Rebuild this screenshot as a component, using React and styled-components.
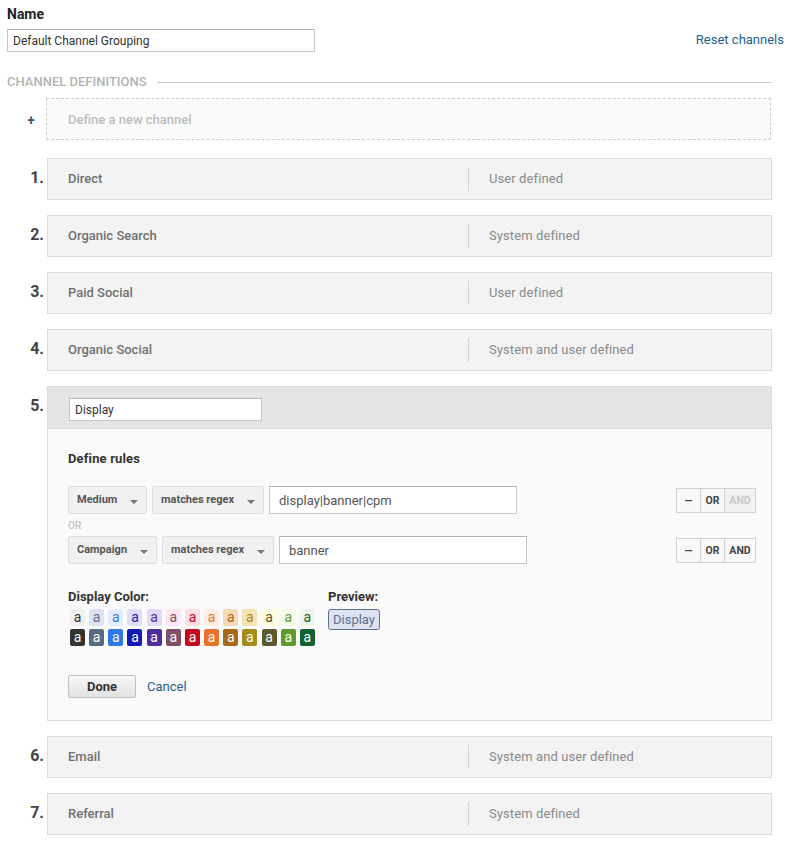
import React from 'react'
import styled, { createGlobalStyle } from 'styled-components'

const GlobalStyle = createGlobalStyle`
  body {
    margin: 0;
    background: #fff;
    font-family: Roboto, "Liberation Sans", sans-serif;
    color: #333;
  }
`

const Page = styled.div`
  width: 794px;
  height: 841px;
  overflow: hidden;
  padding: 6px 10px 0 7px;
  box-sizing: border-box;
`

const NameRow = styled.div`
  display: flex;
  justify-content: space-between;
  align-items: flex-end;
`

const NameLabel = styled.div`
  font-size: 14px;
  line-height: 16px;
  font-weight: 700;
  color: #222;
  margin-bottom: 7px;
`

const TextInput = styled.div`
  box-sizing: border-box;
  width: ${p => p.$width}px;
  height: ${p => p.$height || 23}px;
  padding-left: ${p => p.$pad || 5}px;
  background: #fff;
  border: 1px solid #c8c8c8;
  border-top-color: #b4b4b4;
  font-size: ${p => p.$size || 12}px;
  line-height: ${p => (p.$height || 23) - 1}px;
  color: ${p => p.$color || '#333'};
`

const ResetLink = styled.a`
  font-size: 13px;
  line-height: 16px;
  color: #1f5f8f;
  margin-bottom: 4px;
`

const SectionTitle = styled.div`
  display: flex;
  align-items: center;
  gap: 10px;
  width: 765px;
  margin-top: 22px;
  font-size: 13px;
  line-height: 16px;
  font-weight: 500;
  color: #b4b4b4;
  &::after {
    content: '';
    flex: 1;
    height: 1px;
    background: #c9c9c9;
  }
`

const ChannelList = styled.div`
  display: flex;
  flex-direction: column;
  gap: 15px;
  margin-top: 8px;
`

const ChannelItem = styled.div`
  display: grid;
  grid-template-columns: 40px 725px;
  margin-bottom: ${p => p.$after || 0}px;
`

const ChannelNum = styled.div`
  font-size: 16px;
  line-height: 20px;
  font-weight: 700;
  color: #444;
  text-align: right;
  padding: 10px 3px 0 0;
`

const Plus = styled.div`
  font-size: 14px;
  line-height: 16px;
  font-weight: 700;
  color: #555;
  text-align: right;
  padding: 14px 12px 0 0;
`

const NewChannel = styled.div`
  box-sizing: border-box;
  height: 42px;
  margin: 0 1px 0 -1px;
  padding-left: 21px;
  background: #fafafa;
  border: 1px dashed #cfcfcf;
  font-size: 13px;
  line-height: 41px;
  font-weight: 500;
  color: #bdbdbd;
`

const ChannelBar = styled.div`
  box-sizing: border-box;
  height: 42px;
  display: grid;
  grid-template-columns: 420px 1fr;
  align-items: center;
  background: #f3f3f3;
  border: 1px solid #dcdcdc;
`

const ChannelName = styled.div`
  padding: 0 0 2px 20px;
  font-size: 13px;
  font-weight: 500;
  color: #707070;
`

const ChannelType = styled.div`
  height: 24px;
  line-height: 24px;
  padding-left: 20px;
  border-left: 1px solid #d4d4d4;
  font-size: 13px;
  letter-spacing: 0.09px;
  color: #8a8a8a;
`

const Panel = styled.div`
  box-sizing: border-box;
  height: 335px;
  background: #fafafa;
  border: 1px solid #dcdcdc;
`

const PanelHeader = styled.div`
  box-sizing: border-box;
  height: 42px;
  padding: 11px 0 0 21px;
  background: #e5e5e5;
  border-bottom: 1px solid #dcdcdc;
`

const PanelBody = styled.div`
  padding: 22px 15px 0 20px;
`

const RulesTitle = styled.div`
  font-size: 13px;
  line-height: 16px;
  font-weight: 700;
  letter-spacing: 0.15px;
  color: #333;
`

const RuleRow = styled.div`
  display: flex;
  align-items: center;
  gap: 5px;
  height: 28px;
  margin-top: ${p => p.$top || 0}px;
`

const Select = styled.div`
  box-sizing: border-box;
  width: ${p => p.$width}px;
  height: 28px;
  padding: 0 0 2px 8px;
  display: flex;
  align-items: center;
  justify-content: space-between;
  background: #f1f1f1;
  border: 1px solid #dedede;
  border-radius: 2px;
  font-size: 11px;
  font-weight: 700;
  color: #555;
  &::after {
    content: '';
    margin: 5px 8px 0 0;
    border-left: 4px solid transparent;
    border-right: 4px solid transparent;
    border-top: 4px solid #777;
  }
`

const OrLabel = styled.div`
  height: 22px;
  font-size: 10px;
  line-height: 23px;
  font-weight: 500;
  color: #c4c4c4;
`

const RuleButtons = styled.div`
  display: flex;
  margin-left: auto;
  border: 1px solid #d2d2d2;
  box-sizing: border-box;
  width: 80px;
  height: 25px;
`

const RuleButton = styled.div`
  box-sizing: border-box;
  width: ${p => p.$width}px;
  text-align: center;
  background: ${p => (p.$off ? '#f1f1f1' : '#f8f8f8')};
  border-left: ${p => (p.$first ? 'none' : '1px solid #d2d2d2')};
  font-size: 10.5px;
  line-height: 23px;
  font-weight: 700;
  color: ${p => (p.$off ? '#c8c8c8' : '#444')};
`

const ColorRow = styled.div`
  display: flex;
  gap: 13px;
  margin-top: 25px;
`

const ColorTitle = styled.div`
  font-size: 13px;
  line-height: 16px;
  font-weight: 700;
  color: #333;
  margin-bottom: 4px;
`

const Swatches = styled.div`
  display: grid;
  grid-template-columns: repeat(13, 15px);
  grid-auto-rows: 17px;
  column-gap: 4.167px;
  row-gap: 3px;
  width: 245px;
  padding-left: 2px;
`

const Swatch = styled.div`
  text-align: center;
  border-radius: 2px;
  background: ${p => p.$bg};
  color: ${p => p.$fg};
  font-size: 14px;
  line-height: 17px;
`

const PreviewChip = styled.div`
  box-sizing: border-box;
  width: 52px;
  height: 21px;
  text-align: center;
  background: #dde3f0;
  border: 1px solid #5f6f90;
  border-radius: 3px;
  font-size: 13px;
  line-height: 20px;
  color: #5f6f90;
`

const Actions = styled.div`
  display: flex;
  align-items: center;
  gap: 11px;
  margin-top: 29px;
`

const DoneButton = styled.div`
  box-sizing: border-box;
  width: 68px;
  height: 23px;
  text-align: center;
  background: linear-gradient(#f7f7f7, #e2e2e2);
  border: 1px solid #c0c0c0;
  border-radius: 2px;
  font-size: 13px;
  line-height: 21px;
  font-weight: 700;
  color: #333;
`

const CancelLink = styled.a`
  font-size: 13px;
  color: #1f5f8f;
`

const lightColors = [
  ['#f1f1f1', '#333'], ['#dde3f0', '#5f6f90'], ['#e3edfd', '#3b78e7'], ['#dcdffa', '#1a22b5'],
  ['#e3d9f7', '#4f2d9a'], ['#fbe6f1', '#7f5068'], ['#fcdfe2', '#c00d25'], ['#fdeee2', '#e8722a'],
  ['#f7d9b8', '#a8681c'], ['#f4e4b4', '#a58a1c'], ['#fdfddc', '#555530'], ['#f6fbe9', '#5f9a30'],
  ['#eef5ec', '#11642f'],
]

const darkColors = [
  '#333333', '#5a6a85', '#2f78ea', '#1219b4', '#4f2d9a', '#7f5068', '#c4081f',
  '#e8722a', '#a8681c', '#a58a1c', '#595a30', '#5f9a30', '#11642f',
]

const channelsTop = [
  ['Direct', 'User defined'],
  ['Organic Search', 'System defined'],
  ['Paid Social', 'User defined'],
  ['Organic Social', 'System and user defined'],
]

const channelsBottom = [
  ['Email', 'System and user defined', 6],
  ['Referral', 'System defined', 7],
]

function Channel({ num, name, type }) {
  return (
    <ChannelItem>
      <ChannelNum>{num}.</ChannelNum>
      <ChannelBar>
        <ChannelName>{name}</ChannelName>
        <ChannelType>{type}</ChannelType>
      </ChannelBar>
    </ChannelItem>
  )
}

function Buttons({ andOff }) {
  return (
    <RuleButtons>
      <RuleButton $first $width={23}>—</RuleButton>
      <RuleButton $width={24}>OR</RuleButton>
      <RuleButton $width={31} $off={andOff}>AND</RuleButton>
    </RuleButtons>
  )
}

export default function App() {
  return (
    <Page>
      <GlobalStyle />
      <NameRow>
        <div>
          <NameLabel>Name</NameLabel>
          <TextInput $width={308}>Default Channel Grouping</TextInput>
        </div>
        <ResetLink>Reset channels</ResetLink>
      </NameRow>

      <SectionTitle>CHANNEL DEFINITIONS</SectionTitle>

      <ChannelList>
        <ChannelItem $after={3}>
          <Plus>+</Plus>
          <NewChannel>Define a new channel</NewChannel>
        </ChannelItem>

        {channelsTop.map((c, i) => (
          <Channel key={c[0]} num={i + 1} name={c[0]} type={c[1]} />
        ))}

        <ChannelItem>
          <ChannelNum>5.</ChannelNum>
          <Panel>
            <PanelHeader>
              <TextInput $width={193}>Display</TextInput>
            </PanelHeader>
            <PanelBody>
              <RulesTitle>Define rules</RulesTitle>
              <RuleRow $top={19}>
                <Select $width={79}>Medium</Select>
                <Select $width={112}>matches regex</Select>
                <TextInput $width={248} $height={28} $pad={9} $size={13} $color="#555">display|banner|cpm</TextInput>
                <Buttons andOff />
              </RuleRow>
              <OrLabel>OR</OrLabel>
              <RuleRow>
                <Select $width={89}>Campaign</Select>
                <Select $width={112}>matches regex</Select>
                <TextInput $width={248} $height={28} $pad={9} $size={13} $color="#555">banner</TextInput>
                <Buttons />
              </RuleRow>

              <ColorRow>
                <div>
                  <ColorTitle>Display Color:</ColorTitle>
                  <Swatches>
                    {lightColors.map((c, i) => (
                      <Swatch key={i} $bg={c[0]} $fg={c[1]}>a</Swatch>
                    ))}
                    {darkColors.map((c, i) => (
                      <Swatch key={i} $bg={c} $fg="#fff">a</Swatch>
                    ))}
                  </Swatches>
                </div>
                <div>
                  <ColorTitle>Preview:</ColorTitle>
                  <PreviewChip>Display</PreviewChip>
                </div>
              </ColorRow>

              <Actions>
                <DoneButton>Done</DoneButton>
                <CancelLink>Cancel</CancelLink>
              </Actions>
            </PanelBody>
          </Panel>
        </ChannelItem>

        {channelsBottom.map(c => (
          <Channel key={c[0]} num={c[2]} name={c[0]} type={c[1]} />
        ))}
      </ChannelList>
    </Page>
  )
}
